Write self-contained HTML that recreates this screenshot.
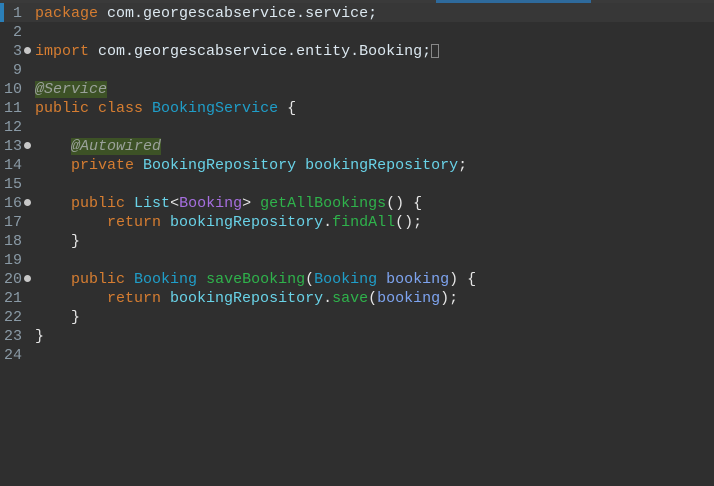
<!DOCTYPE html>
<html><head><meta charset="utf-8"><style>
body{margin:0;width:714px;height:486px;background:#2f2f2f;overflow:hidden;position:relative;font-family:"Liberation Mono",monospace;font-size:15px}
.top{position:absolute;left:0;top:0;width:714px;height:3px;background:#3a3a3a}
.topb{position:absolute;left:436px;top:0;width:155px;height:3px;background:#2e6a9c}
.hl{position:absolute;left:0;top:3px;width:714px;height:19px;background:#373737}
.mk{position:absolute;left:0;top:3px;width:4px;height:19px;background:#2b7fb8}
.l{position:absolute;left:0;height:19px;line-height:21px;white-space:pre;color:#e6e6e6}
.n{position:absolute;right:-23px;width:20px;text-align:right;color:#8a9aa6;left:2px}
.c{position:absolute;left:35px}
.k{color:#d67d31}.t{color:#69d3e8}.w{color:#dce8f0}.b{color:#1f9ec9}.g{color:#2fb24b}.p{color:#a66fe0}.v{color:#7ea4f0}
.a{color:#9aa19a;font-style:italic;background:#3d5226}
.f{position:absolute;left:24px;top:6px;width:7px;height:7px;border-radius:50%;background:#c8c8c8}
.box{display:inline-block;width:8px;height:14px;border:1px solid #888;vertical-align:-3px;box-sizing:border-box}
</style></head><body>
<div class="top"></div><div class="topb"></div><div class="hl"></div><div class="mk"></div>
<div class="l" style="top:3px"><span class="n">1</span><span class="c"><span class="k">package</span> <span class="w">com.georgescabservice.service;</span></span></div>
<div class="l" style="top:22px"><span class="n">2</span></div>
<div class="l" style="top:41px"><span class="n">3</span><span class="f"></span><span class="c"><span class="k">import</span> <span class="w">com.georgescabservice.entity.Booking;</span><span class="box"></span></span></div>
<div class="l" style="top:60px"><span class="n">9</span></div>
<div class="l" style="top:79px"><span class="n">10</span><span class="c"><span class="a">@Service</span></span></div>
<div class="l" style="top:98px"><span class="n">11</span><span class="c"><span class="k">public class</span> <span class="b">BookingService</span> {</span></div>
<div class="l" style="top:117px"><span class="n">12</span></div>
<div class="l" style="top:136px"><span class="n">13</span><span class="f"></span><span class="c">    <span class="a">@Autowired</span></span></div>
<div class="l" style="top:155px"><span class="n">14</span><span class="c">    <span class="k">private</span> <span class="t">BookingRepository bookingRepository</span>;</span></div>
<div class="l" style="top:174px"><span class="n">15</span></div>
<div class="l" style="top:193px"><span class="n">16</span><span class="f"></span><span class="c">    <span class="k">public</span> <span class="t">List</span>&lt;<span class="p">Booking</span>&gt; <span class="g">getAllBookings</span>() {</span></div>
<div class="l" style="top:212px"><span class="n">17</span><span class="c">        <span class="k">return</span> <span class="t">bookingRepository</span>.<span class="g">findAll</span>();</span></div>
<div class="l" style="top:231px"><span class="n">18</span><span class="c">    }</span></div>
<div class="l" style="top:250px"><span class="n">19</span></div>
<div class="l" style="top:269px"><span class="n">20</span><span class="f"></span><span class="c">    <span class="k">public</span> <span class="b">Booking</span> <span class="g">saveBooking</span>(<span class="b">Booking</span> <span class="v">booking</span>) {</span></div>
<div class="l" style="top:288px"><span class="n">21</span><span class="c">        <span class="k">return</span> <span class="t">bookingRepository</span>.<span class="g">save</span>(<span class="v">booking</span>);</span></div>
<div class="l" style="top:307px"><span class="n">22</span><span class="c">    }</span></div>
<div class="l" style="top:326px"><span class="n">23</span><span class="c">}</span></div>
<div class="l" style="top:345px"><span class="n">24</span></div>
</body></html>
